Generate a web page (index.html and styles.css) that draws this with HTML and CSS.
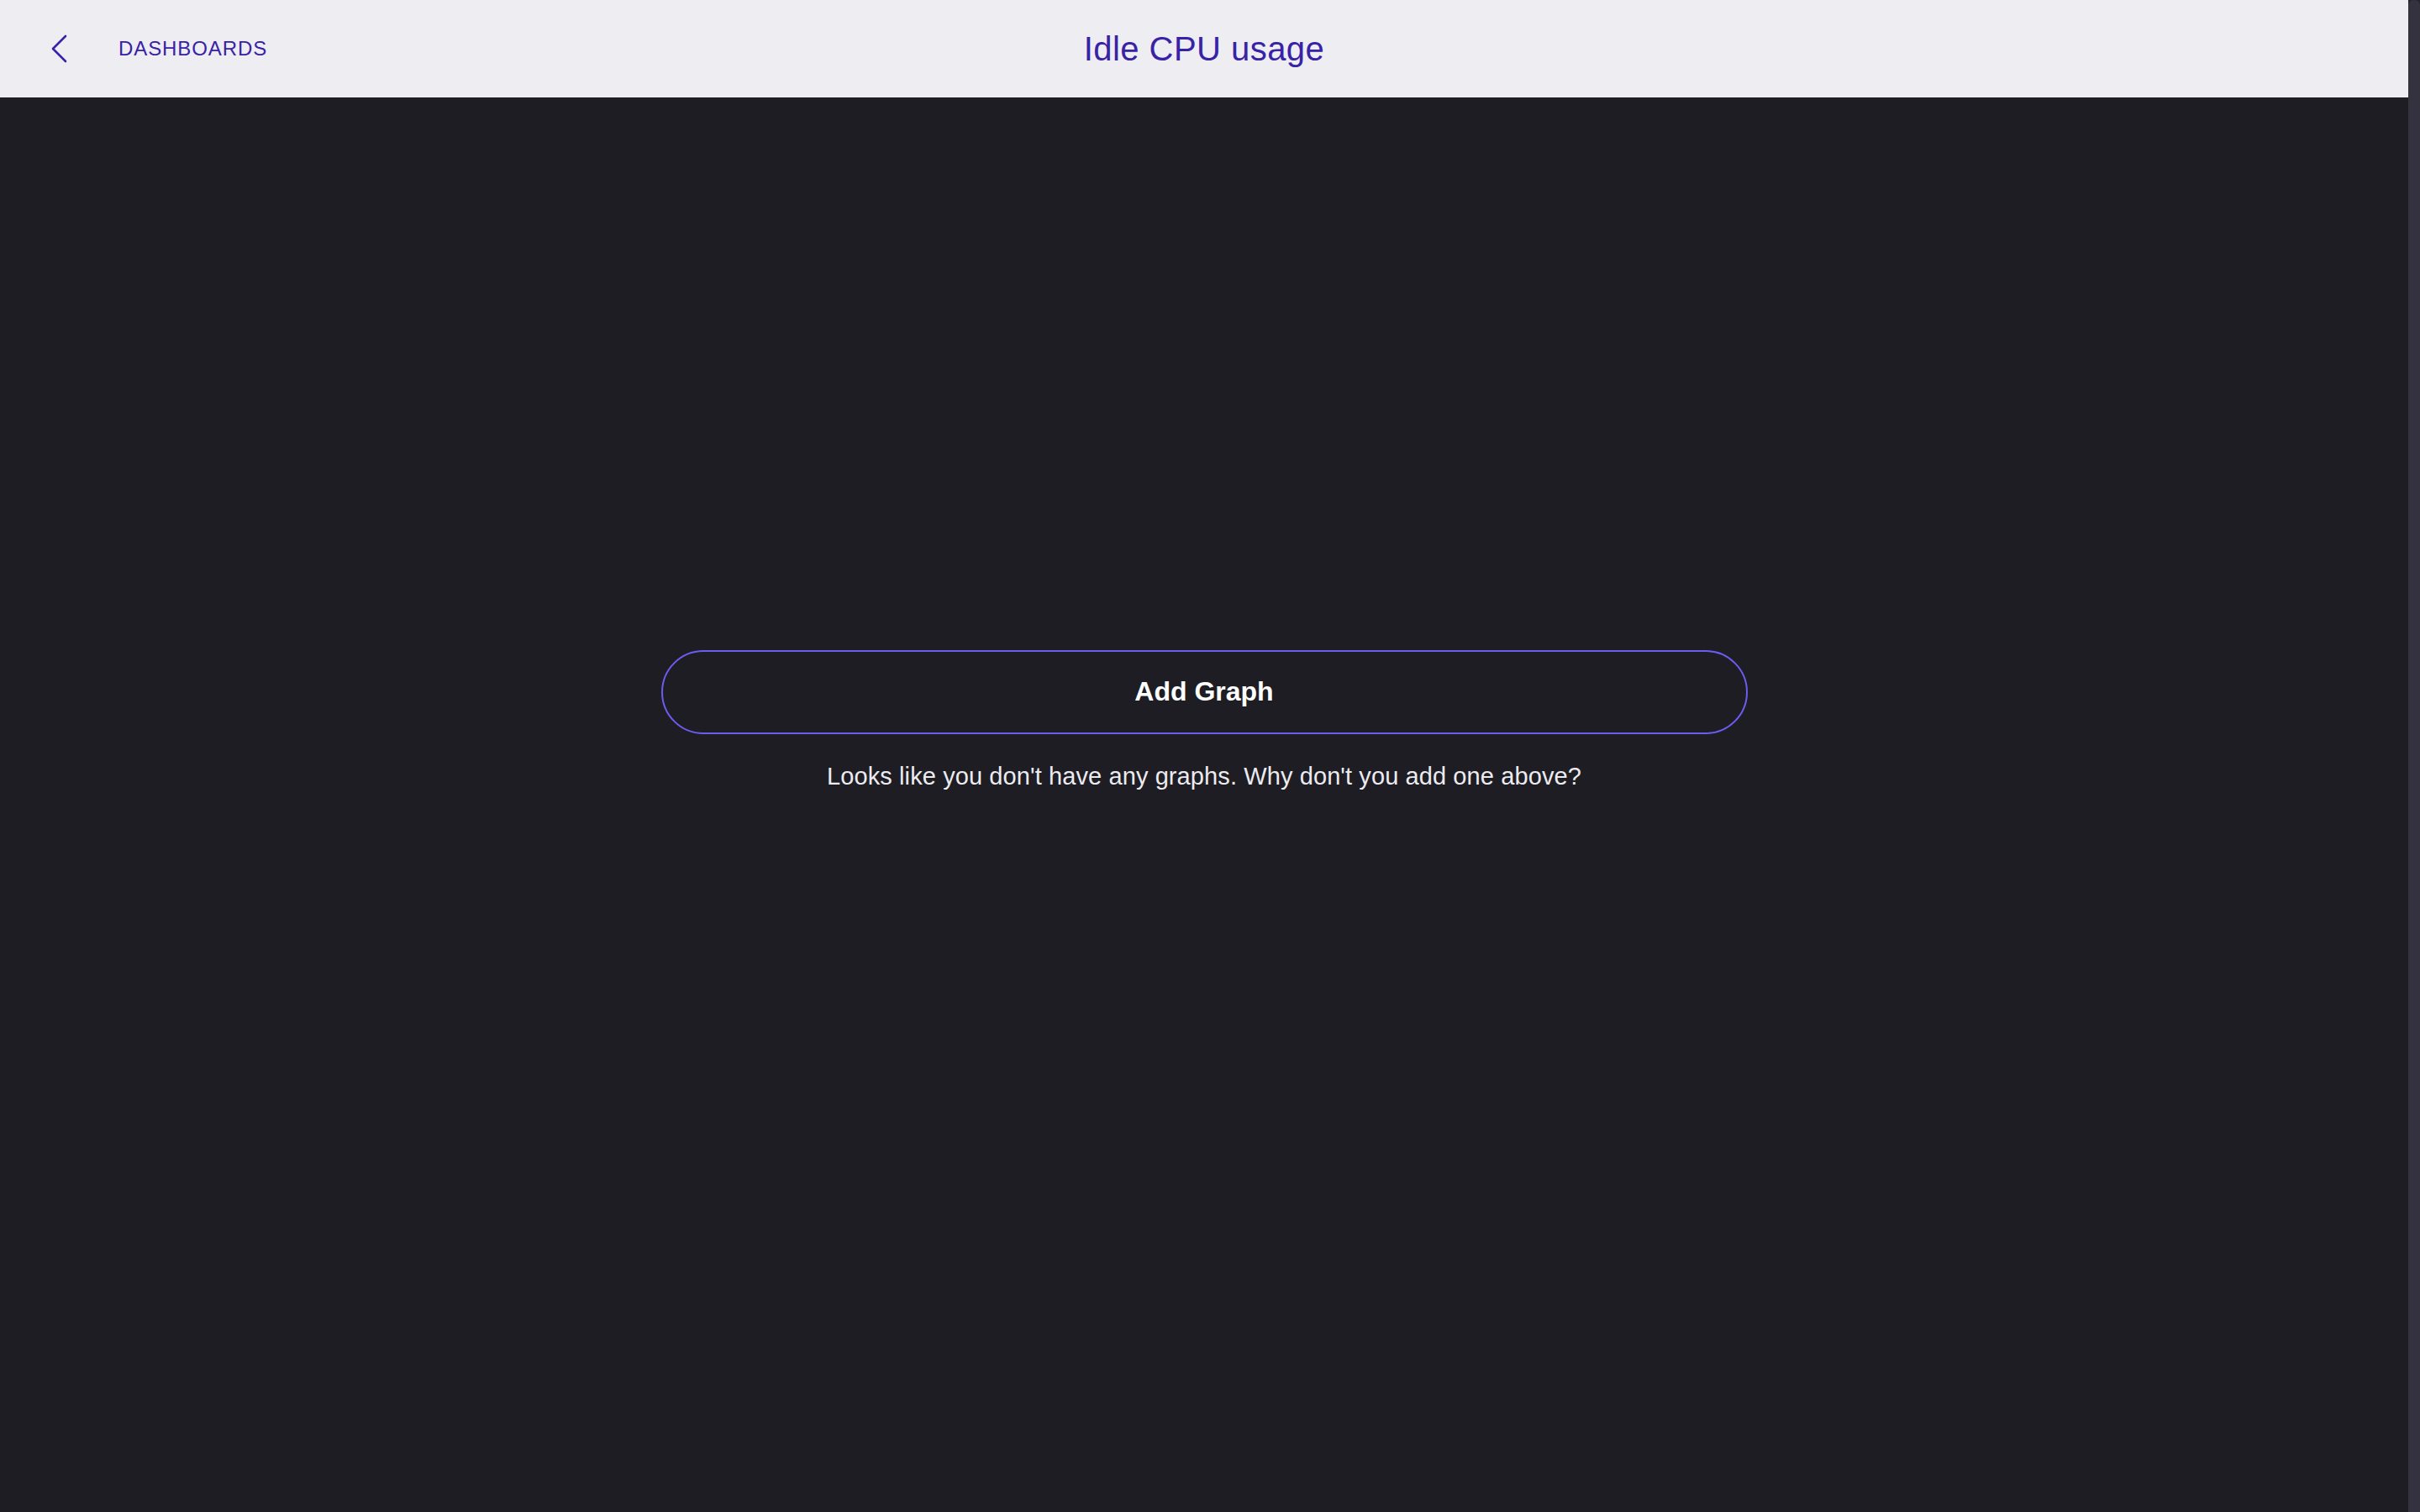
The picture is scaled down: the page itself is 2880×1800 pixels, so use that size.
FILE: index.html
```html
<!DOCTYPE html>
<html lang="en">
<head>
<meta charset="utf-8">
<title>Idle CPU usage</title>
<link rel="stylesheet" href="styles.css">
</head>
<body>
<div class="app">
  <div class="page">
    <header class="topbar">
      <a class="back" href="#">
        <svg class="chevron" width="20" height="34" viewBox="0 0 20 34" aria-hidden="true">
          <polyline points="17,2 2,17 17,32" fill="none" stroke="currentColor" stroke-width="2.6" stroke-linecap="round" stroke-linejoin="round"/>
        </svg>
        <span class="back-label">DASHBOARDS</span>
      </a>
      <h1 class="title">Idle CPU usage</h1>
      <div class="spacer"></div>
    </header>
    <main class="content">
      <button class="add-graph" type="button">Add Graph</button>
      <p class="empty">Looks like you don't have any graphs. Why don't you add one above?</p>
    </main>
  </div>
  <div class="scrollbar"><div class="thumb"></div></div>
</div>
</body>
</html>
```
FILE: styles.css
```css
html, body {
  margin: 0;
  padding: 0;
  height: 100%;
  background: #1e1d24;
  font-family: "Liberation Sans", Arial, Helvetica, sans-serif;
  overflow: hidden;
}

.app {
  display: flex;
  height: 100vh;
}

.page {
  flex: 1;
  display: flex;
  flex-direction: column;
  min-width: 0;
}

.topbar {
  height: 116px;
  flex: 0 0 116px;
  background: #eeedf2;
  display: grid;
  grid-template-columns: 1fr auto 1fr;
  align-items: center;
}

.back {
  display: flex;
  align-items: center;
  padding-left: 61px;
  color: #3823a6;
  text-decoration: none;
}

.chevron {
  display: block;
}

.back-label {
  margin-left: 60px;
  font-size: 24px;
  letter-spacing: 0.9px;
  color: #3823a6;
}

.title {
  margin: 0;
  font-size: 40px;
  font-weight: normal;
  color: #3823a6;
  letter-spacing: 0.45px;
}

.content {
  flex: 1;
  display: flex;
  flex-direction: column;
  align-items: center;
  padding-top: 658px;
}

.add-graph {
  width: 1293px;
  height: 100px;
  box-sizing: border-box;
  border: 2px solid #6c5cf0;
  border-radius: 50px;
  background: transparent;
  color: #ffffff;
  font-family: "Liberation Sans", Arial, Helvetica, sans-serif;
  font-size: 32px;
  font-weight: bold;
  cursor: pointer;
  display: flex;
  align-items: center;
  justify-content: center;
  padding: 0 0 2px;
}

.empty {
  margin: 33px 0 0;
  font-size: 29px;
  line-height: 34px;
  letter-spacing: 0.1px;
  color: #ececf0;
}

.scrollbar {
  width: 14px;
  flex: 0 0 14px;
  background: #25242c;
  display: flex;
}

.thumb {
  flex: 1;
  background: #33323e;
  border-radius: 6px 6px 0 0;
}
```
